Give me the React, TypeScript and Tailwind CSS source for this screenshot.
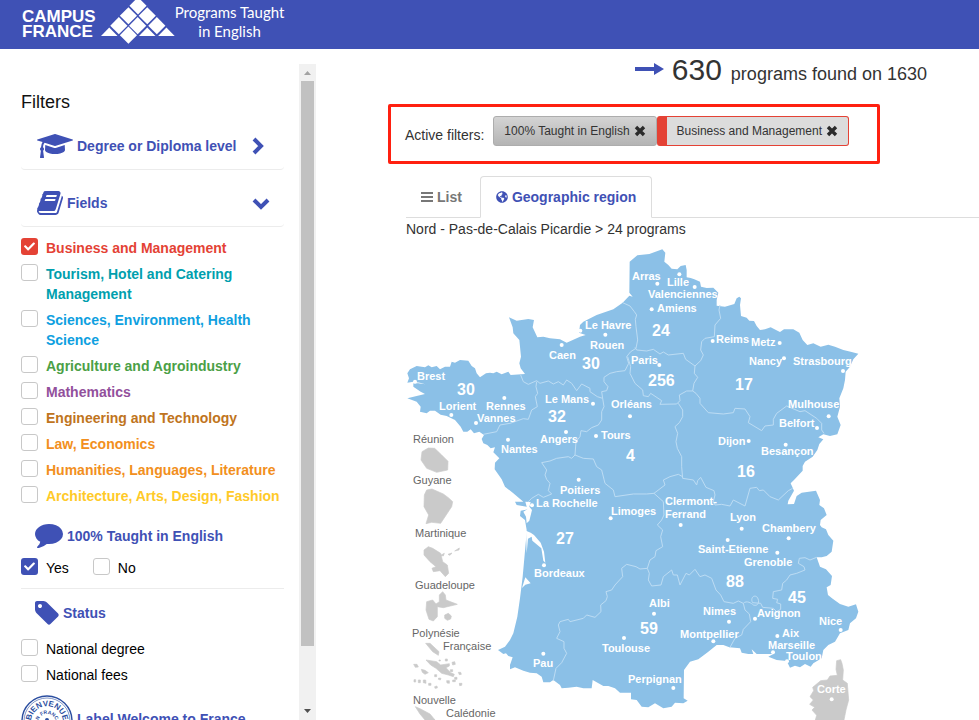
import { useState, type ReactNode } from "react";
import { FaCheck, FaGlobeAmericas } from "react-icons/fa";

const FIELDS = [
  { label: "Business and Management", color: "text-[#e44235]" },
  { label: "Tourism, Hotel and Catering Management", color: "text-[#009fae]" },
  { label: "Sciences, Environment, Health Science", color: "text-[#0f9fe0]" },
  { label: "Agriculture and Agroindustry", color: "text-[#4ba046]" },
  { label: "Mathematics", color: "text-[#92509c]" },
  { label: "Engineering and Technology", color: "text-[#bf7420]" },
  { label: "Law, Economics", color: "text-[#f28f20]" },
  { label: "Humanities, Languages, Literature", color: "text-[#f28f20]" },
  { label: "Architecture, Arts, Design, Fashion", color: "text-[#ffca28]" },
];

// [name, x, baseline]
const CITIES: [string, number, number][] = [
  ["Brest", 417, 380], ["Lorient", 439, 410], ["Rennes", 486, 410], ["Vannes", 477, 422],
  ["Nantes", 501, 453], ["Caen", 549, 359], ["Le Havre", 585, 329], ["Rouen", 590, 349],
  ["Le Mans", 545, 403], ["Angers", 540, 443], ["Tours", 601, 439], ["Orléans", 611, 408],
  ["Poitiers", 560, 494], ["La Rochelle", 536, 507], ["Limoges", 611, 515], ["Bordeaux", 534, 577],
  ["Pau", 533, 667], ["Toulouse", 602, 652], ["Arras", 632, 280], ["Lille", 667, 286],
  ["Valenciennes", 648, 298], ["Amiens", 657, 312], ["Reims", 716, 343], ["Metz", 751, 346],
  ["Nancy", 749, 365], ["Strasbourg", 793, 365], ["Paris", 631, 364], ["Mulhouse", 788, 408],
  ["Belfort", 779, 427], ["Dijon", 718, 445], ["Besançon", 761, 455], ["Clermont-", 665, 505],
  ["Ferrand", 665, 518], ["Lyon", 730, 521], ["Chambery", 762, 532], ["Saint-Etienne", 698, 553],
  ["Grenoble", 744, 566], ["Albi", 649, 607], ["Nimes", 703, 615], ["Montpellier", 680, 638],
  ["Avignon", 757, 617], ["Nice", 819, 625], ["Aix", 782, 637], ["Marseille", 768, 649],
  ["Toulon", 786, 660], ["Perpignan", 628, 683], ["Corte", 817, 693],
];

const COUNTS: [number, number, number][] = [
  [24, 652, 336], [30, 582, 369], [30, 457, 395], [32, 548, 422], [256, 648, 386], [17, 735, 390],
  [4, 626, 461], [16, 737, 477], [27, 556, 544], [59, 640, 634], [88, 726, 587], [45, 788, 603],
];

const OVERSEAS: [string, number, number][] = [
  ["Réunion", 413, 443], ["Guyane", 413, 484], ["Martinique", 415, 537], ["Guadeloupe", 415, 589],
  ["Polynésie", 412, 637], ["Française", 443, 650], ["Nouvelle", 413, 704], ["Calédonie", 446, 717],
];

const DOTS = [
  [45, 425], [154, 525], [313, 474], [228, 549], [324, 599], [485, 315], [541, 272], [616, 284],
  [579, 491], [498, 576], [588, 588], [690, 529], [536, 719], [396, 796], [632, 835], [432, 976],
  [430, 1241], [672, 1194], [772, 131], [838, 103], [884, 141], [755, 208], [938, 303], [1139, 309],
  [1152, 355], [1329, 393], [778, 375], [1286, 529], [1251, 564], [1046, 603], [1157, 614],
  [842, 855], [1025, 866], [1166, 895], [983, 900], [1132, 938], [762, 1121], [987, 1145],
  [940, 1204], [1065, 1136], [1322, 1170], [1132, 1188], [1119, 1237], [1161, 1264], [820, 1344],
  [1295, 1378],
];

const FRANCE =
  "M688 158L689 65 712 46 748 42 787 28 796 38 793 65 805 75 815 86 832 88 842 78 857 75 860 90 860 112 872 114 883 118 900 125 903 140 920 144 940 143 955 158 950 180 950 197 975 200 1003 192 1010 175 1018 170 1023 175 1020 195 1023 228 1040 233 1048 242 1062 243 1070 258 1080 270 1095 268 1112 262 1128 270 1140 276 1152 268 1180 268 1198 278 1208 300 1222 315 1240 310 1262 320 1285 314 1305 320 1330 330 1352 335 1375 341 1360 358 1350 380 1337 395 1335 420 1330 445 1318 475 1320 500 1312 530 1322 555 1312 583 1290 588 1270 583 1255 592 1270 598 1258 612 1252 630 1238 650 1215 665 1208 678 1208 692 1182 720 1172 730 1182 752 1165 782 1163 793 1182 792 1190 768 1205 758 1248 752 1260 780 1258 795 1272 805 1280 825 1262 840 1260 855 1265 862 1278 868 1285 885 1300 902 1295 935 1280 948 1265 952 1250 952 1260 980 1278 988 1296 1008 1292 1035 1280 1042 1284 1065 1298 1076 1320 1092 1345 1100 1368 1093 1375 1115 1368 1135 1350 1150 1345 1170 1320 1180 1305 1205 1285 1215 1270 1230 1265 1255 1240 1270 1232 1280 1215 1272 1200 1282 1185 1277 1170 1283 1160 1263 1130 1260 1105 1250 1120 1242 1095 1242 1070 1242 1055 1228 1060 1242 1045 1242 1025 1238 1020 1225 988 1222 970 1215 950 1215 925 1235 895 1258 870 1265 852 1290 851 1375 863 1382 850 1390 825 1388 815 1400 790 1405 765 1390 745 1402 725 1400 710 1380 693 1378 693 1358 660 1358 645 1345 625 1338 610 1338 578 1320 575 1345 550 1345 530 1340 505 1343 485 1345 480 1335 460 1320 450 1327 430 1327 425 1310 410 1300 390 1298 370 1292 345 1282 330 1288 330 1275 338 1252 325 1248 318 1240 310 1242 294 1230 315 1220 330 1200 340 1180 352 1130 360 1075 368 1010 378 900 380 870 375 840 360 828 362 812 385 808 380 800 350 795 345 785 370 785 340 760 315 740 305 718 284 688 285 668 298 655 280 637 285 622 272 625 262 615 250 610 245 597 252 585 238 575 222 580 212 568 202 575 190 575 182 560 165 540 140 528 122 524 105 512 90 512 80 520 60 515 62 500 50 485 22 475 50 468 75 462 62 455 40 440 40 430 55 430 75 433 60 428 40 425 22 428 27 415 22 400 30 388 50 378 75 382 85 376 95 382 110 378 120 388 135 380 150 380 155 365 165 368 180 360 205 362 215 378 225 385 230 400 240 412 258 400 270 398 280 400 290 395 305 403 325 395 332 405 375 402 362 385 358 370 363 350 358 300 340 280 338 262 327 232 350 242 385 237 402 240 398 262 412 292 430 290 450 295 480 298 500 308 540 290 557 285 537 278 540 255 550 245 590 225 640 208 668 188 688 167 698 170Z";

const BORDERS = [
  "M668 188L690 198 703 215 710 225 706 238 708 260 713 300 708 325 692 335 680 350 686 370 675 392 650 395 630 400 612 412 612 425 624 440 620 452 605 455 608 475",
  "M705 322L710 330 740 333 760 328 780 342 790 336 805 345 850 340 857 358 885 378",
  "M960 195L957 210 962 235 945 255 943 290 915 295 905 305 902 330 910 345 902 362 885 378 883 400 893 412 882 430 878 453",
  "M683 350L692 380 690 400 705 430 728 450 730 467 745 470 752 460 785 482 780 493 830 492 840 482 838 465 860 453 878 453 888 460 900 475 900 490 925 518 970 522 1000 518 1005 505 1035 507 1050 530 1045 548 1085 572 1095 558 1120 555 1120 538 1130 520 1160 498 1200 515 1215 512 1250 535 1265 550 1265 570 1272 580",
  "M835 490L848 510 848 530 838 548 825 560 833 580 828 605 832 625 845 650 845 680 848 715",
  "M848 710L835 703 810 710 790 720 795 735 762 760 740 762 700 762 645 770 640 750 615 730 612 718 605 690 590 680 580 657 550 655 525 645",
  "M525 645L515 655 505 650 470 655 450 663 425 668 440 690 435 705 440 718 450 730 445 752 455 762 430 772 415 763 395 775 385 785",
  "M608 475L612 500 605 515 605 540 595 555 575 563 560 575 543 572 540 590 528 605 525 645",
  "M410 425L408 440 413 460 406 470 412 500 395 510 385 538 370 536 330 550 300 555 290 575 250 583",
  "M362 405L370 425 385 433 410 422 420 430 445 423 460 432 475 425 490 435 500 420 515 430 530 452 545 432 570 445 570 455 592 470 608 475",
  "M848 715L880 720 890 735 893 722 902 712 918 742 942 752 945 765 940 785 945 795 965 793 990 798 1000 780 1035 798 1050 745 1070 742 1078 752 1090 750 1110 770 1135 780 1165 752 1178 745",
  "M762 760L790 785 792 825 785 840 772 855 788 870 782 890 788 920 768 932 765 950 750 960 742 985",
  "M742 985L720 987 708 980 680 973 665 985 668 1010 645 1035 635 1050 618 1055 622 1070 618 1082 602 1095 603 1115 585 1132 560 1125 550 1135 510 1145 505 1138 480 1145 475 1155 480 1175 470 1195 492 1205 492 1225 500 1240 485 1268 468 1285 460 1322",
  "M742 985L748 1000 745 1020 755 1038 783 1035 790 1010 815 990 820 1005 832 1005 840 1035 858 1000 868 1005 885 988 900 1010 915 1005 935 1015 948 1050 962 1065 972 1085 1000 1090 1015 1083 1030 1090 1035 1110 1048 1122 1052 1145 1030 1168 1025 1185 1005 1195 990 1222",
  "M1030 1090C1040 1080 1055 1090 1060 1095C1075 1100 1080 1085 1072 1072C1062 1062 1050 1075 1058 1088L1082 1090 1088 1102 1120 1105 1130 1115 1142 1108 1142 1092 1130 1088 1133 1078 1118 1075 1120 1055 1145 1050 1148 1030 1160 1020 1170 1005 1190 1000 1215 990 1212 980 1195 970 1198 955 1215 953 1230 960 1250 952",
];

const ISLANDS = [
  // Réunion
  "M66 635L85 624 104 625 125 645 144 664 143 690 110 697 80 685 63 660Z",
  // Guyane
  "M80 750L96 747 130 762 145 773 158 785 155 800 122 850 95 847 78 851 86 825 72 800 73 765Z",
  // Martinique
  "M72 930L85 920 98 925 122 940 128 965 142 975 146 1000 136 1010 120 992 100 995 96 985 108 980 90 965 72 945Z",
  "M122 946L133 940 130 948Z M144 943L156 939 150 946Z M164 933L178 924 177 930Z",
  // Guadeloupe
  "M80 1085L98 1080 108 1092 118 1085 118 1065 128 1055 136 1065 138 1080 172 1093 130 1103 112 1100 112 1130 100 1143 87 1138 78 1110Z M134 1125L145 1120 154 1128 152 1137 142 1141 134 1135Z",
  // Polynésie
  "M77 1210L90 1210 117 1235 115 1246 98 1235Z",
  "M41 1273L51 1273 55 1281 46 1282Z M64 1288L75 1291 85 1298 75 1303 67 1297Z M78 1260L110 1265 122 1275 148 1271 148 1278 138 1283 152 1298 163 1303 160 1310 145 1305 125 1300 108 1285 92 1275Z M117 1260H121V1263H117Z M136 1257H142V1263H136Z M156 1267L164 1265 166 1273 158 1275Z M151 1289H158V1295H151Z M175 1297L182 1297 184 1303 178 1304Z M164 1312H171V1318H164Z M104 1304H110V1310H104Z M116 1314L123 1315 121 1320 115 1318Z M140 1322L148 1322 148 1330 141 1329Z M158 1320H166V1325H158Z M178 1330L186 1330 185 1336 179 1337Z M42 1319H47V1326H42Z M55 1320H61V1328H55Z M70 1320L77 1320 78 1330 70 1328Z M86 1330H93V1336H86Z M104 1340L111 1338 112 1344 105 1345Z",
  // Nouvelle Calédonie
  "M46 1400L62 1407 90 1422 105 1440H75L60 1422Z",
  // Corse
  "M1310 1262L1322 1259 1326 1270 1330 1290 1328 1320 1342 1330 1346 1380 1338 1410 1332 1440H1246L1250 1426 1236 1410 1244 1402 1229 1393 1240 1380 1230 1370 1241 1352 1238 1342 1262 1322 1282 1320 1290 1308 1312 1306 1308 1288Z",
];

function CheckBox({ label, className = "", box = "checked:bg-[#3f51b5]", checked }: { label: string; className?: string; box?: string; checked?: boolean }) {
  return (
    <label className={`flex items-start gap-2 pb-[6px] text-sm leading-5 ${className}`}>
      <span className="relative block h-[17px] w-[17px] shrink-0">
        <input
          type="checkbox"
          defaultChecked={checked}
          className={`peer block h-[17px] w-[17px] appearance-none rounded-[3px] border border-[#c8c8c8] bg-white checked:border-transparent ${box}`}
        />
        <FaCheck className="pointer-events-none absolute left-[3px] top-[3px] hidden h-[11px] w-[11px] text-white peer-checked:block" />
      </span>
      <span>{label}</span>
    </label>
  );
}

function CapIcon() {
  return (
    <svg viewBox="0 0 2304 1792" className="h-7 w-9 shrink-0 fill-current">
      <path d="M1774 836l18 316q4 69-82 128t-235 93.500-323 34.500-323-34.500-235-93.500-82-128l18-316 574 181q22 7 48 7t48-7zM2304 512q0 23-22 31l-1120 352q-4 1-10 1t-10-1l-652-206q-43 34-71 111.500t-34 178.500q63 36 63 109 0 69-58 107l58 433q2 14-8 25-9 11-24 11h-192q-15 0-24-11-10-11-8-25l58-433q-58-38-58-107 0-73 65-111 11-207 98-330l-333-104q-22-8-22-31t22-31l1120-352q4-1 10-1t10 1l1120 352q22 8 22 31z" />
    </svg>
  );
}

function BookIcon() {
  return (
    <svg viewBox="0 0 1664 1792" className="h-7 w-[26px] shrink-0 fill-current">
      <path d="M1639 478q40 57 18 129l-275 906q-19 64-76.500 107.500t-122.500 43.500h-923q-77 0-148.500-53.500t-99.500-131.500q-24-67-2-127 0-4 3-27t4-37q1-8-3-21.500t-3-19.500q2-11 8-21t16.500-23.500 16.500-23.500q23-38 45-91.500t30-91.500q3-10 .5-30t-.5-28q3-11 17-28t17-23q21-36 42-92t25-90q1-9-2.500-32t.5-28q4-13 22-30.500t22-22.500q19-26 42.500-84.500t27.500-96.500q1-8-3-25.500t-2-26.500q2-8 9-18t18-23 17-21q8-12 16.500-30.500t15-35 16-36 19.500-32 26.500-23.500 36-11.500 47.500 5.500l-1 3q38-9 51-9h761q74 0 114 56t18 130l-274 906q-36 119-71.500 153.500t-128.500 34.500h-869q-27 0-38 15-11 16-1 43 24 70 144 70h923q29 0 56-15.500t35-41.500l300-987q7-22 5-57 38 15 59 43zM575 480q-4 13 2 22.500t20 9.500h608q13 0 25.500-9.500t16.500-22.500l21-64q4-13-2-22.500t-20-9.500h-608q-13 0-25.500 9.500t-16.500 22.500zM492 736q-4 13 2 22.500t20 9.500h608q13 0 25.500-9.500t16.500-22.500l21-64q4-13-2-22.500t-20-9.500h-608q-13 0-25.500 9.500t-16.500 22.500z" />
    </svg>
  );
}

function CommentIcon() {
  return (
    <svg viewBox="0 0 1792 1792" className="h-7 w-7 shrink-0 fill-current">
      <path d="M1792 896q0 174-120 321.500t-326 233-450 85.500q-70 0-145-8-198 175-460 242-49 14-114 22-17 2-30.500-9t-17.500-29v-1q-3-4-.5-12t2-10 4.500-9.500l6-9 7-8.500 8-9q7-8 31-34.500t34.500-38 31-39.500 32.500-51 27-59 26-76q-157-89-247.500-220t-90.500-281q0-130 71-248.500t191-204.500 286-136.500 348-50.500q244 0 450 85.500t326 233 120 321.500z" />
    </svg>
  );
}

function TagIcon() {
  return (
    <svg viewBox="0 0 1536 1792" className="h-7 w-6 shrink-0 fill-current">
      <path d="M448 448q0-53-37.500-90.500t-90.500-37.500-90.500 37.500-37.500 90.500 37.500 90.500 90.500 37.500 90.500-37.500 37.500-90.500zM1515 1024q0 53-37 90l-491 492q-39 37-91 37-53 0-90-37l-715-716q-38-37-64.500-101t-26.500-117v-416q0-52 38-90t90-38h416q53 0 117 26.500t102 64.500l715 714q37 39 37 91z" />
    </svg>
  );
}

function Cross() {
  return (
    <svg viewBox="0 0 12 12" className="h-3 w-3 shrink-0">
      <path d="M2 2L10 10M10 2L2 10" stroke="#2b2b2b" strokeWidth="3.4" />
    </svg>
  );
}

function Stamp() {
  return (
    <svg viewBox="0 0 52 52" className="h-[52px] w-[52px] shrink-0 text-[#2b4ea0]" fill="none" stroke="currentColor">
      <circle cx="26" cy="26" r="25" strokeWidth="1.4" />
      <circle cx="26" cy="26" r="23" strokeWidth="0.6" />
      <path id="stampOuter" d="M12 35A16 16 0 1 1 40 35" stroke="none" />
      <path id="stampInner" d="M17 28A9 9 0 1 1 35 28" stroke="none" />
      <text fill="currentColor" stroke="none" fontSize="8" fontWeight="700">
        <textPath href="#stampOuter" startOffset="50%" textAnchor="middle">BIENVENUE</textPath>
      </text>
      <text fill="currentColor" stroke="none" fontSize="5" fontWeight="700">
        <textPath href="#stampInner" startOffset="50%" textAnchor="middle">EN FRANCE</textPath>
      </text>
      <circle cx="26" cy="25" r="2" fill="currentColor" stroke="none" />
    </svg>
  );
}

function Section({ icon, title, open }: { icon: ReactNode; title: string; open: boolean }) {
  return (
    <button type="button" className="flex h-[57px] w-full items-center gap-1 rounded-sm border-b border-[#ececec] pl-4 pt-[10px] text-left text-sm font-bold text-[#3f51b5]">
      {icon}
      <span className="flex-1">{title}</span>
      <svg viewBox="0 0 18 18" className={`mr-[14px] h-[18px] w-[18px] ${open ? "" : "-translate-x-1 -rotate-90"}`} fill="none" stroke="currentColor" strokeWidth="4">
        <path d="M2 6L9 13 16 6" />
      </svg>
    </button>
  );
}

function Logo() {
  return (
    <div className="flex">
      <div className="pl-[22px] pt-[9px] text-[17px] font-bold leading-[15px]">
        <div>CAMPUS</div>
        <div>FRANCE</div>
      </div>
      <svg viewBox="300 0 224 132" className="ml-[5px] h-11 w-[74px]" fill="#fff">
        {[[412, 17], [383, 47], [440, 47], [354, 77], [411, 77], [469, 77], [383, 106]].map(([x, y]) => (
          <path key={`${x}-${y}`} d={`M${x} ${y - 26}l26 26-26 26-26-26z`} />
        ))}
        {[325, 440, 498].map(x => (
          <path key={x} d={`M${x} 83l25 25h-50z`} />
        ))}
      </svg>
    </div>
  );
}

function FranceMap() {
  return (
    <svg viewBox="406 240 573 480" className="h-[480px] w-[573px] shrink-0">
      <g transform="translate(400 240) scale(.33333)">
        <path d={FRANCE} fill="#8bc0e7" />
        {BORDERS.map(d => (
          <path key={d} d={d} fill="none" stroke="#bddcf3" strokeWidth="3" strokeLinejoin="round" />
        ))}
        {/* estuaries and inlets */}
        <path d="M378 872L392 878 402 885 422 908 432 935 436 968 430 962 424 925 397 902 395 890 384 896 380 940ZM366 1044L376 1012 392 1030 376 1034ZM376 785L392 786 388 800 396 810 388 842 380 850 378 830 370 815 382 808Z" fill="#fff" />
        {ISLANDS.map(d => (
          <path key={d} d={d} fill="#cacaca" stroke="#cacaca" strokeWidth="2" strokeLinejoin="round" />
        ))}
        {DOTS.map(([x, y]) => (
          <circle key={`${x}-${y}`} cx={x} cy={y} r="6" fill="#fff" />
        ))}
      </g>
      <g fill="#fff" fontSize="11" fontWeight="700">
        {CITIES.map(([name, x, y]) => (
          <text key={name} x={x} y={y}>{name}</text>
        ))}
      </g>
      <g fill="#fff" fontSize="16" fontWeight="700">
        {COUNTS.map(([n, x, y]) => (
          <text key={`${x}-${y}`} x={x} y={y}>{n}</text>
        ))}
      </g>
      <g fill="#666" fontSize="11">
        {OVERSEAS.map(([name, x, y]) => (
          <text key={name} x={x} y={y}>{name}</text>
        ))}
      </g>
    </svg>
  );
}

export default function App() {
  const [tab, setTab] = useState("map");

  return (
    <div className="flex h-screen flex-col overflow-hidden bg-white font-['Liberation_Sans',Arial,sans-serif] text-[#333]">
      <header className="flex h-[49px] shrink-0 overflow-hidden bg-[#3f51b5] text-white">
        <Logo />
        <p className="pt-[3px] text-center font-['Lato','Open_Sans',sans-serif] text-[15px] leading-[19px]">
          Programs Taught
          <br />
          in English
        </p>
      </header>

      <div className="flex min-h-0 flex-1">
        {/* filters */}
        <aside className="flex w-[316px] shrink-0 pt-[15px] text-black">
          <div className="flex-1 overflow-hidden pl-[21px] pr-[15px]">
            <h2 className="pt-[27px] text-lg leading-[22px] text-[#111]">Filters</h2>
            <Section icon={<CapIcon />} title="Degree or Diploma level" open={false} />
            <Section icon={<BookIcon />} title="Fields" open />
            <div className="w-[270px] pt-[11px] font-bold">
              {FIELDS.map((f, i) => (
                <CheckBox key={f.label} label={f.label} className={f.color} box="checked:bg-[#e44235]" checked={i === 0} />
              ))}
            </div>
            <h3 className="flex items-center gap-1 pl-[14px] pt-2 text-sm font-bold text-[#3f51b5]">
              <CommentIcon />
              <span className="pt-1">100% Taught in English</span>
            </h3>
            <div className="flex gap-6 border-b border-[#ececec] pb-1 pt-[10px]">
              <CheckBox label="Yes" checked />
              <CheckBox label="No" />
            </div>
            <h3 className="flex items-center gap-1 pb-3 pl-[14px] pt-[10px] text-sm font-bold text-[#3f51b5]">
              <TagIcon />
              <span>Status</span>
            </h3>
            <CheckBox label="National degree" />
            <CheckBox label="National fees" />
            <h3 className="flex items-start gap-1 pt-1 text-sm font-bold leading-5 text-[#3f51b5]">
              <Stamp />
              <span className="whitespace-nowrap pt-[14px]">Label Welcome to France</span>
            </h3>
          </div>
          {/* scroll track */}
          <div className="flex w-[17px] flex-col items-center justify-between bg-[#f1f1f1]">
            <svg viewBox="0 0 17 17" className="h-[17px] w-[17px] shrink-0" fill="#a3a3a3"><path d="M5 11h7L8.500 7z" /></svg>
            <div className="w-[13px] flex-[565] bg-[#c1c1c1]" />
            <div className="flex-[57]" />
            <svg viewBox="0 0 17 17" className="h-[17px] w-[17px] shrink-0" fill="#505050"><path d="M5 6h7L8.500 10z" /></svg>
          </div>
        </aside>

        {/* results */}
        <main className="min-w-0 flex-1 pl-[72px]">
          <div className="flex h-[55px] items-baseline justify-end pr-[52px]">
            <svg viewBox="0 0 30 14" className="mr-2 mt-[13px] h-[14px] w-[30px] self-start" fill="#3f51b5">
              <path d="M1 5H20V1L30 7 20 13V9H1z" />
            </svg>
            <span className="text-[30px] leading-[42px]">630</span>
            <span className="pl-[9px] text-lg">programs found on 1630</span>
          </div>

          <div className="flex h-[60px] w-[492px] items-start rounded-xs border-3 border-[#ff2010] pl-[14px] pt-[9px]">
            <span className="pr-[9px] pt-[9px] text-sm leading-5">Active filters:</span>
            <button type="button" className="flex h-[30px] items-center gap-1 rounded-[3px] border border-[#adadad] bg-linear-to-b from-[#d4d4d4] to-[#b4b4b4] px-[10px] text-xs">
              100% Taught in English <Cross />
            </button>
            <button type="button" className="flex h-[30px] items-center gap-1 rounded-[3px] border border-l-[10px] border-[#e44235] bg-[#dcdcdc] px-[10px] text-xs">
              Business and Management <Cross />
            </button>
          </div>

          <div className="ml-[18px] pt-3">
            <div className="flex border-b border-[#ddd] text-sm font-bold">
              <button type="button" onClick={() => setTab("list")} className="flex h-[41px] items-center gap-1 pl-[15px] pr-[18px] text-[#777]">
                <svg viewBox="0 0 12 12" className="h-3 w-3" stroke="currentColor" strokeWidth="2"><path d="M0 2H12M0 6H12M0 10H12" /></svg>
                List
              </button>
              <button
                type="button"
                onClick={() => setTab("map")}
                className={`-mb-px flex h-[42px] items-center gap-1 rounded-t border border-[#ddd] px-[15px] text-[#3f51b5] ${tab === "map" ? "border-b-white" : ""}`}
              >
                <FaGlobeAmericas className="h-3 w-3" />
                Geographic region
              </button>
            </div>
            <p className="text-sm leading-[22px]">Nord - Pas-de-Calais Picardie &gt; 24 programs</p>
            <FranceMap />
          </div>
        </main>
      </div>
    </div>
  );
}
